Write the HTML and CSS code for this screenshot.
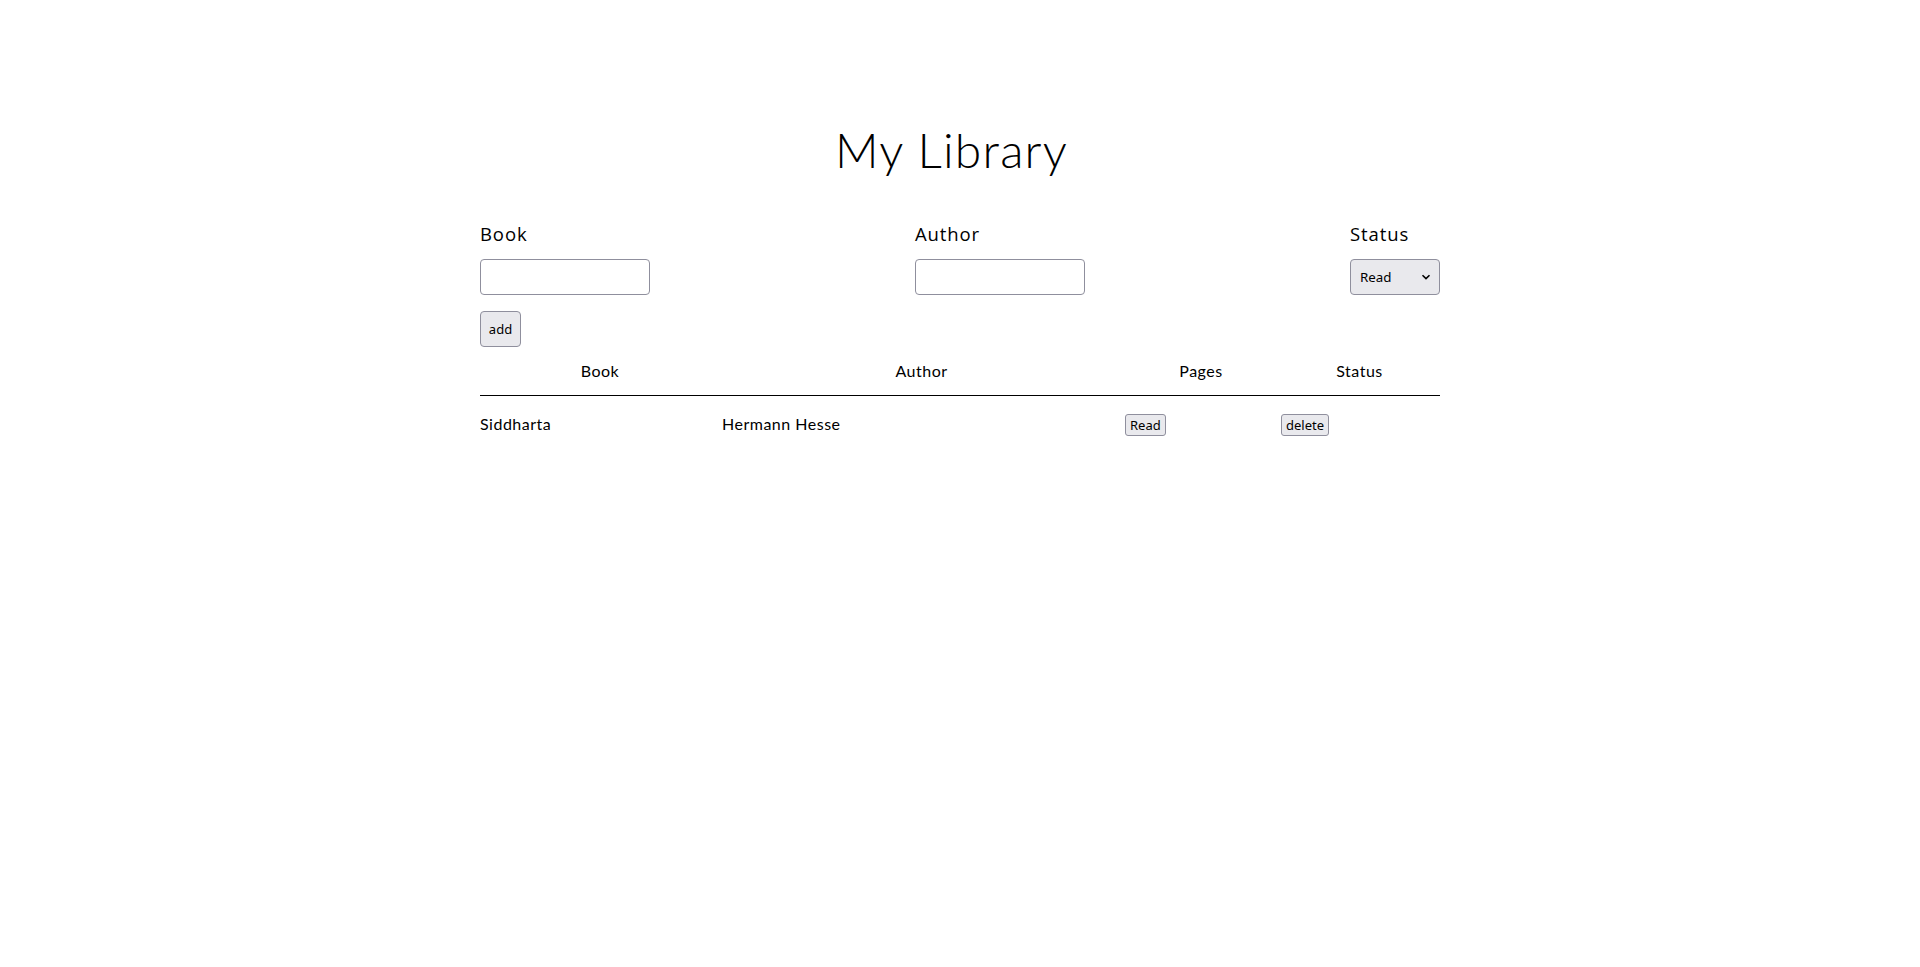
FILE: index.html
```html
<!DOCTYPE html>
<html lang="en">
<head>
<meta charset="utf-8">
<title>My Library</title>
<link rel="stylesheet" href="styles.css">
</head>
<body>
<main class="container">
  <h1 class="title">My Library</h1>
  <form class="book-form">
    <div class="field">
      <label class="field-label" for="book">Book</label>
      <input class="text-input" id="book" type="text">
    </div>
    <div class="field">
      <label class="field-label" for="author">Author</label>
      <input class="text-input" id="author" type="text">
    </div>
    <div class="field">
      <label class="field-label" for="status">Status</label>
      <div class="select-wrap">
        <select class="select" id="status">
          <option>Read</option>
          <option>Not read</option>
        </select>
        <svg class="select-arrow" width="10" height="6" viewBox="0 0 10 6"><path d="M1.5 1.2 L5 4.6 L8.5 1.2" fill="none" stroke="#000" stroke-width="1.6"/></svg>
      </div>
    </div>
  </form>
  <button class="btn btn-add" type="button">add</button>
  <table class="books">
    <colgroup>
      <col class="c-book"><col class="c-author"><col class="c-pages"><col class="c-status">
    </colgroup>
    <thead>
      <tr><th>Book</th><th>Author</th><th>Pages</th><th>Status</th></tr>
    </thead>
    <tbody>
      <tr>
        <td>Siddharta</td>
        <td>Hermann Hesse</td>
        <td><button class="btn btn-small" type="button">Read</button></td>
        <td><button class="btn btn-small" type="button">delete</button></td>
      </tr>
    </tbody>
  </table>
</main>
</body>
</html>
```

FILE: styles.css
```css
* { box-sizing: border-box; }
html, body { margin: 0; padding: 0; background: #fff; }
body {
  font-family: "Lato", "Liberation Sans", sans-serif;
  color: #000;
}
.container {
  width: 960px;
  margin: 0 auto;
  padding-top: 121px;
}
.title {
  margin: 0;
  padding-right: 17px;
  font-size: 48px;
  line-height: 58px;
  font-weight: 300;
  text-align: center;
  letter-spacing: 1.2px;
}
.book-form {
  display: flex;
  justify-content: space-between;
  margin-top: 43px;
}
.field {
  display: flex;
  flex-direction: column;
}
.field-label {
  font-family: "Open Sans", "Lato", sans-serif;
  font-size: 18.5px;
  line-height: 24px;
  font-weight: 500;
  letter-spacing: 0.9px;
  margin-bottom: 13px;
}
.text-input {
  width: 170px;
  height: 36px;
  border: 1px solid #8f8f9d;
  border-radius: 4px;
  background: #fff;
  padding: 0 6px;
  font: 13.33px "Noto Sans", sans-serif;
}
.select-wrap {
  position: relative;
  width: 90px;
  height: 36px;
}
.select {
  appearance: none;
  -webkit-appearance: none;
  width: 90px;
  height: 36px;
  border: 1px solid #8f8f9d;
  border-radius: 4px;
  background: #e9e9ed;
  color: #000;
  padding: 0 0 0 9px;
  font: 13.33px "Noto Sans", sans-serif;
}
.select-arrow {
  position: absolute;
  right: 9px;
  top: 15px;
  pointer-events: none;
}
.btn {
  font: 13px "Noto Sans", sans-serif;
  color: #000;
  background: #e9e9ed;
  border: 1px solid #8f8f9d;
  border-radius: 4px;
}
.btn-add {
  display: block;
  margin-top: 16px;
  width: 41px;
  height: 36px;
  padding: 0;
}
.btn-small {
  height: 22px;
  padding: 0 4px;
  margin-top: 3px;
  line-height: 18px;
  border-radius: 3px;
}
.books {
  width: 960px;
  border-collapse: collapse;
  margin-top: 8px;
  font-size: 16px;
  letter-spacing: 0.5px;
}
.c-book { width: 240px; }
.c-author { width: 403px; }
.c-pages { width: 156px; }
.c-status { width: 161px; }
.books th {
  font-weight: 400;
  text-align: center;
  height: 40px;
  padding: 0 2px 8px;
  border-bottom: 1px solid #000;
}
.books td {
  height: 56px;
  padding: 0 2px;
  text-align: left;
  vertical-align: middle;
}
.books td:first-child { padding-left: 0; }
```
